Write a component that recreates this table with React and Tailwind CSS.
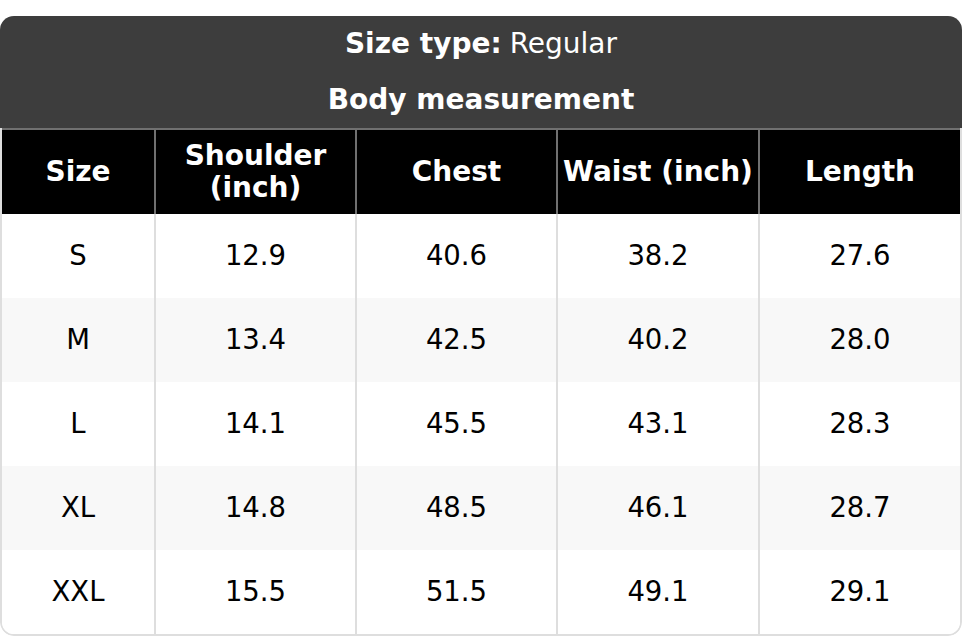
import React from 'react';

const headers = ['Size', 'Shoulder (inch)', 'Chest', 'Waist (inch)', 'Length'];

const rows = [
    ['S', '12.9', '40.6', '38.2', '27.6'],
    ['M', '13.4', '42.5', '40.2', '28.0'],
    ['L', '14.1', '45.5', '43.1', '28.3'],
    ['XL', '14.8', '48.5', '46.1', '28.7'],
    ['XXL', '15.5', '51.5', '49.1', '29.1'],
];

const cols = 'grid grid-cols-[154px_201px_201px_202px_1fr]';

const App = () => {
    return (
        <div className="w-[962px] h-[636px] bg-white pt-4 font-['DejaVu_Sans',sans-serif] text-[28px]">
            <div className="rounded-t-[14px] rounded-b-[14px] overflow-hidden">
                {/* Title block */}
                <div className="bg-[#3d3d3d] text-white text-center">
                    <div className="h-14 flex items-center justify-center">
                        <span className="font-bold">Size type:</span>
                        <span className="ml-2">Regular</span>
                    </div>
                    <div className="h-14 flex items-center justify-center font-bold">
                        Body measurement
                    </div>
                </div>

                <div className="border-x-2 border-b-2 border-[#dedede] rounded-b-[14px] overflow-hidden">
                    {/* Column headers */}
                    <div className={`${cols} bg-black text-white font-bold border-t-2 border-[#707070]`}>
                        {headers.map((h, i) => (
                            <div
                                key={h}
                                className={`h-[84px] flex items-center justify-center text-center leading-8 px-1 ${i < headers.length - 1 ? 'border-r-2 border-[#707070]' : ''}`}
                            >
                                {h}
                            </div>
                        ))}
                    </div>

                    {/* Body rows */}
                    {rows.map((r, ri) => (
                        <div key={r[0]} className={`${cols} ${ri % 2 === 1 ? 'bg-[#f8f8f8]' : 'bg-white'} text-black text-[27.5px]`}>
                            {r.map((c, ci) => (
                                <div
                                    key={ci}
                                    className={`h-[84px] flex items-center justify-center ${ci < r.length - 1 ? 'border-r-2 border-[#dedede]' : ''}`}
                                >
                                    {c}
                                </div>
                            ))}
                        </div>
                    ))}
                </div>
            </div>
        </div>
    );
};

export default App;
